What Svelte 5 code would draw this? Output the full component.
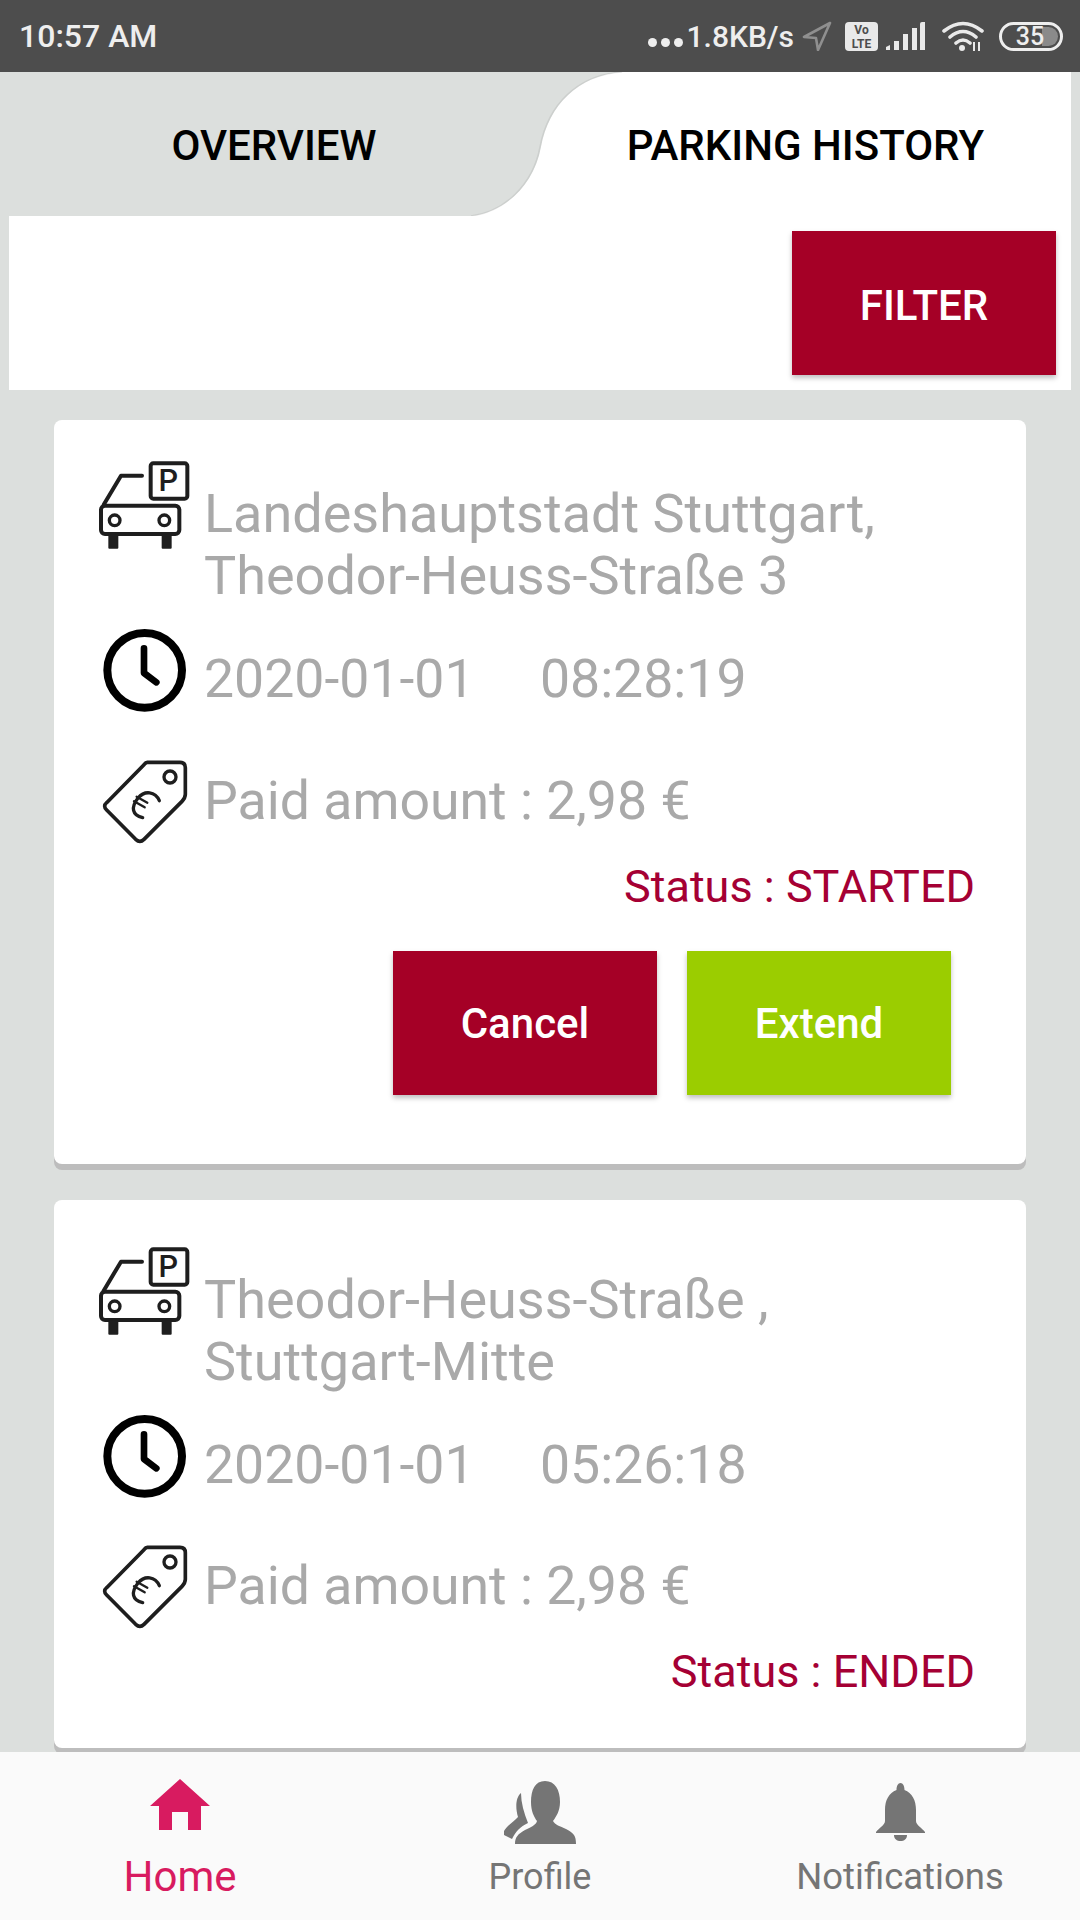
<script lang="ts">
	const tickets = [
		{
			address: ['Landeshauptstadt Stuttgart,', 'Theodor-Heuss-Straße 3'],
			date: '2020-01-01',
			time: '08:28:19',
			amount: 'Paid amount : 2,98 €',
			status: 'Status : STARTED',
			active: true
		},
		{
			address: ['Theodor-Heuss-Straße ,', 'Stuttgart-Mitte'],
			date: '2020-01-01',
			time: '05:26:18',
			amount: 'Paid amount : 2,98 €',
			status: 'Status : ENDED',
			active: false
		}
	];
</script>

<div class="screen">
	<header class="statusbar">
		<span class="clock-text">10:57 AM</span>
		<div class="status-icons">
			<span class="dots"><i></i><i></i><i></i></span>
			<span class="speed">1.8KB/s</span>
			<svg class="s-nav" viewBox="0 0 30 30" width="30" height="30">
				<path d="M28 2 L2 16 L14 17 L16 29 Z" fill="none" stroke="#8f8f8f" stroke-width="2.6" stroke-linejoin="round" />
			</svg>
			<svg class="s-volte" viewBox="0 0 33 29" width="33" height="29">
				<rect width="33" height="29" rx="4" fill="#e9e9e9" />
				<text x="16.5" y="12" text-anchor="middle" class="volte-text">Vo</text>
				<text x="16.5" y="26" text-anchor="middle" class="volte-text">LTE</text>
			</svg>
			<svg class="s-signal" viewBox="0 0 40 30" width="40" height="30">
				<path d="M1 29 V26 L5 24 V29 Z M9 29 V20 H14 V29 Z M18 29 V13 H23 V29 Z M27 29 V7 H32 V29 Z" fill="#e9e9e9" />
				<path d="M35 29 V3 Q35 1 37 1 H40 V29 Z" fill="#e9e9e9" />
			</svg>
			<svg class="s-wifi" viewBox="0 0 44 30" width="44" height="30">
				<path d="M3 10 Q22 -5 41 10 M9 16 Q22 5 35 16 M15 22 Q22 16 29 22" fill="none" stroke="#e9e9e9" stroke-width="3.6" stroke-linecap="round" />
				<circle cx="21" cy="27" r="3" fill="#e9e9e9" />
				<path d="M33 21 V30 M38 21 V30" stroke="#e9e9e9" stroke-width="2" />
			</svg>
			<div class="battery">
				<span class="level"></span>
				<span class="pct">35</span>
			</div>
		</div>
	</header>

	<main class="content">
		<nav class="tabs">
			<svg class="tab-shape" viewBox="0 0 1071 144" width="1071" height="144" aria-hidden="true">
				<path d="M623 0 C578 3 549 33 541 75 C534 113 505 140 472 144 L1071 144 L1071 0 Z" fill="#fff" />
				<path d="M622 0 C577 3 548 33 540 75 C533 113 504 140 471 144" fill="none" stroke="#000" stroke-opacity="0.07" stroke-width="1.5" />
			</svg>
			<span class="tab">OVERVIEW</span>
			<span class="tab second">PARKING HISTORY</span>
		</nav>

		<div class="filter-panel">
			<button class="btn filter">FILTER</button>
		</div>

		<div class="list">
			{#each tickets as t}
				<article class="card">
					<div class="row address-row">
						<svg class="icon car" viewBox="50 50 285 285" width="95" height="95">
							<g fill="none" stroke="#1e1e1e" stroke-width="12" stroke-linecap="round" stroke-linejoin="round">
								<path d="M185 103 H122 L70 190" />
								<rect x="62" y="193" width="235" height="85" rx="12" />
								<circle cx="103" cy="237" r="16" stroke-width="10" />
								<circle cx="252" cy="237" r="16" stroke-width="10" />
								<rect x="211" y="66" width="110" height="106" rx="8" />
							</g>
							<rect x="84" y="280" width="30" height="42" rx="3" fill="#1e1e1e" />
							<rect x="244" y="280" width="30" height="42" rx="3" fill="#1e1e1e" />
							<text x="264" y="149" text-anchor="middle" class="p-mark">P</text>
						</svg>
						<div class="address">
							{#each t.address as line}
								<div>{line}</div>
							{/each}
						</div>
					</div>

					<div class="row time-row">
						<svg class="icon clock" viewBox="55 45 270 270" width="90" height="90">
							<circle cx="192" cy="178" r="112" fill="none" stroke="#000" stroke-width="24" />
							<path d="M190 112 V186 L227 214" fill="none" stroke="#000" stroke-width="20" stroke-linecap="round" stroke-linejoin="round" />
						</svg>
						<div class="info">
							<span class="date">{t.date}</span>
							<span>{t.time}</span>
						</div>
					</div>

					<div class="row price-row">
						<svg class="icon tag" viewBox="55 50 270 270" width="90" height="90">
							<g fill="none" stroke="#1e1e1e" stroke-linecap="round" stroke-linejoin="round">
								<path d="M200 69 H298 Q314 69 314 85 V165 Q314 176 304 186 L190 300 Q178 312 165 300 L78 212 Q66 200 78 190 L190 76 Q195 69 200 69 Z" stroke-width="11" />
								<circle cx="268" cy="113" r="18" stroke-width="10" />
								<path d="M236 184 C224 156 192 152 172 176 C150 204 154 228 186 235" stroke-width="10" />
								<path d="M168 172 L200 190 M160 186 L192 204" stroke-width="7" />
							</g>
						</svg>
						<div class="info">{t.amount}</div>
					</div>

					<div class="status">{t.status}</div>

					{#if t.active}
						<div class="actions">
							<button class="btn cancel">Cancel</button>
							<button class="btn extend">Extend</button>
						</div>
					{/if}
				</article>
			{/each}
		</div>
	</main>

	<footer class="bottom-nav">
		<div class="nav-item selected">
			<div class="nav-icon">
				<svg viewBox="0 0 60 51" width="60" height="51">
					<path d="M30 0 L60 27 H51 V51 H38 V33 H22 V51 H9 V27 H0 Z" fill="#d81b60" />
				</svg>
			</div>
			<span>Home</span>
		</div>
		<div class="nav-item">
			<div class="nav-icon">
				<svg viewBox="0 0 72 63" width="72" height="63">
					<path d="M17 12 C12 16 11 26 14 36 C10 41 3 44 0 50 V54 L8 58 C12 50 16 46 24 42 C20 32 17 22 17 12 Z" fill="#757575" />
					<path d="M41 0 C31 0 27 9 27 21 C27 30 30 36 33 40 C32 44 27 46 21 49 C14 53 11 56 11 63 H72 C72 55 70 52 62 48 C56 45 51 44 49 40 C52 36 56 30 56 21 C56 9 51 0 41 0 Z" fill="#757575" />
				</svg>
			</div>
			<span>Profile</span>
		</div>
		<div class="nav-item">
			<div class="nav-icon">
				<svg viewBox="0 0 49 58" width="49" height="58">
					<path d="M24.5 0 C27 0 28.5 3 28.5 7 C36 10 40 17 40 27 V38 C40 42 46 45 49 49 V50 H0 V49 C3 45 9 42 9 38 V27 C9 17 13 10 20.5 7 C20.5 3 22 0 24.5 0 Z" fill="#757575" />
					<path d="M18 52 H31 C31 56 28 58 24.5 58 C21 58 18 56 18 52 Z" fill="#757575" />
				</svg>
			</div>
			<span class="nav-wide">Notifications</span>
		</div>
	</footer>
</div>

<style>
	:global(body) {
		margin: 0;
		background: #dcdfdd;
	}

	.screen {
		display: flex;
		flex-direction: column;
		height: 1920px;
		width: 1080px;
		overflow: hidden;
		font-family: Roboto, 'Liberation Sans', sans-serif;
		background: #dcdfdd;
	}

	.statusbar {
		height: 72px;
		flex-shrink: 0;
		background: #4d4d4d;
		display: flex;
		align-items: center;
		justify-content: space-between;
		padding: 0 17px 0 19px;
		color: #eee;
		box-sizing: border-box;
	}

	.clock-text {
		font-size: 32px;
		font-weight: 500;
	}

	.status-icons {
		display: flex;
		align-items: center;
	}

	.dots {
		display: flex;
		gap: 4px;
		align-self: flex-end;
		margin-bottom: 7px;
		margin-right: 4px;
	}

	.dots i {
		width: 9px;
		height: 9px;
		border-radius: 50%;
		background: #eee;
	}

	.speed {
		font-size: 30px;
		font-weight: 500;
		margin-right: 8px;
	}

	.s-volte {
		margin-left: 13px;
	}

	.s-signal {
		margin-left: 7px;
	}

	.s-wifi {
		margin-left: 16px;
	}

	.volte-text {
		font-size: 12px;
		font-weight: 700;
		fill: #4d4d4d;
	}

	.battery {
		position: relative;
		margin-left: 14px;
		width: 64px;
		height: 29px;
		box-sizing: border-box;
		border: 3px solid #eee;
		border-radius: 15px;
		overflow: hidden;
		display: flex;
		align-items: center;
		justify-content: center;
	}

	.level {
		position: absolute;
		right: 2px;
		top: 2px;
		bottom: 2px;
		width: 16px;
		border-radius: 0 10px 10px 0;
		background: #8a8a8a;
	}

	.pct {
		position: relative;
		font-size: 25px;
		font-weight: 500;
		padding-right: 2px;
	}

	.content {
		flex: 1;
		min-height: 0;
		overflow: hidden;
	}

	.tabs {
		position: relative;
		display: grid;
		grid-template-columns: 548px 1fr;
		height: 144px;
		width: 1071px;
		align-items: center;
	}

	.tab-shape {
		position: absolute;
		left: 0;
		top: 0;
	}

	.tab {
		position: relative;
		text-align: center;
		font-size: 42px;
		font-weight: 500;
		color: #000;
		margin-top: 3px;
	}

	.tab.second {
		padding-right: 8px;
	}

	.filter-panel {
		margin: 0 9px;
		height: 174px;
		background: #fff;
		display: flex;
		justify-content: flex-end;
		padding: 15px 15px 0 0;
		box-sizing: border-box;
	}

	.btn {
		border: none;
		border-radius: 0;
		width: 264px;
		height: 144px;
		color: #fff;
		font-family: inherit;
		font-size: 42px;
		font-weight: 500;
		padding: 0;
		box-shadow: 0 3px 5px rgba(0, 0, 0, 0.25);
	}

	.filter {
		padding-top: 4px;
	}

	.filter,
	.cancel {
		background: #a50026;
	}

	.extend {
		background: #9bcd00;
	}

	.list {
		padding: 30px 54px 0;
		display: flex;
		flex-direction: column;
		gap: 36px;
	}

	.card {
		background: #fff;
		border-radius: 8px;
		box-shadow: 0 6px 0 #bdbdbd;
		padding: 38px 51px 69px 43px;
		flex-shrink: 0;
	}

	.card + .card {
		padding-top: 44px;
		padding-bottom: 46px;
	}

	.card + .card .price-row {
		margin-top: 39px;
	}

	.row {
		display: flex;
		color: #a9a9a9;
		font-size: 54px;
		line-height: 62px;
	}

	.icon {
		flex-shrink: 0;
	}

	.address {
		margin-left: 12px;
		padding-top: 25px;
	}

	.time-row {
		margin-top: 19px;
	}

	.clock,
	.tag {
		margin-left: 2px;
	}

	.info {
		padding-top: 22px;
		margin-left: 15px;
		font-size: 53.6px;
		white-space: nowrap;
	}

	.price-row {
		margin-top: 40px;
	}

	.price-row .info {
		padding-top: 14px;
	}

	.date {
		margin-right: 52px;
	}

	.p-mark {
		font-size: 92px;
		font-weight: 500;
		fill: #1e1e1e;
	}

	.status {
		margin-top: 11px;
		text-align: right;
		color: #a50034;
		font-size: 45px;
		line-height: 60px;
	}

	.actions {
		display: flex;
		justify-content: flex-end;
		gap: 30px;
		margin-top: 34px;
		padding-right: 24px;
	}

	.bottom-nav {
		position: relative;
		height: 168px;
		flex-shrink: 0;
		background: #fafafa;
		display: grid;
		grid-template-columns: repeat(3, 1fr);
		padding-top: 27px;
		box-sizing: border-box;
	}

	.nav-item {
		display: flex;
		flex-direction: column;
		align-items: center;
		color: #757575;
		font-size: 36px;
		line-height: 50px;
	}

	.nav-wide {
		font-size: 36.5px;
	}

	.nav-icon {
		height: 66px;
		margin-bottom: 7px;
		display: flex;
		align-items: center;
	}

	.nav-item.selected {
		color: #d81b60;
		font-size: 42px;
	}

	.nav-item.selected .nav-icon {
		align-items: flex-start;
	}

	svg {
		display: block;
	}
</style>
